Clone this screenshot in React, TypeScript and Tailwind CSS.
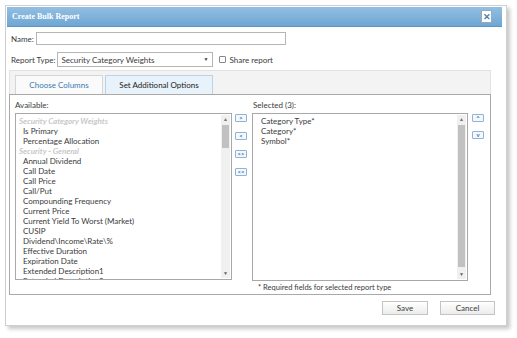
import React from "react";

const available: { label: string; group?: boolean }[] = [
  { label: "Security Category Weights", group: true },
  { label: "Is Primary" },
  { label: "Percentage Allocation" },
  { label: "Security - General", group: true },
  { label: "Annual Dividend" },
  { label: "Call Date" },
  { label: "Call Price" },
  { label: "Call/Put" },
  { label: "Compounding Frequency" },
  { label: "Current Price" },
  { label: "Current Yield To Worst (Market)" },
  { label: "CUSIP" },
  { label: "Dividend\\Income\\Rate\\%" },
  { label: "Effective Duration" },
  { label: "Expiration Date" },
  { label: "Extended Description1" },
  { label: "Extended Description2" },
];

const selected = ["Category Type*", "Category*", "Symbol*"];

const Scrollbar = ({ thumbTop, thumbBottom }: { thumbTop: number; thumbBottom: number }) => (
  <div className="absolute right-[1px] top-[1px] bottom-[1px] w-[9px] bg-[#f0f0f0]">
    <div className="h-[9px] flex items-center justify-center text-[5px] leading-none text-[#707070]">▲</div>
    <div
      className="absolute left-[1px] right-[1px] bg-[#c1c1c1]"
      style={{ top: thumbTop, bottom: thumbBottom }}
    />
    <div className="absolute bottom-0 left-0 right-0 h-[9px] flex items-center justify-center text-[5px] leading-none text-[#606060]">▼</div>
  </div>
);

const SmallBtn = ({ children }: { children: React.ReactNode }) => (
  <div className="w-[12px] h-[8px] border border-[#8fb3d6] rounded-[1px] bg-[#f4f8fc] flex items-center justify-center text-[6px] leading-none text-[#3d6fa8] font-bold">
    {children}
  </div>
);

export default function App() {
  return (
    <div className="w-[517px] h-[338px] bg-white overflow-hidden font-['Lato',sans-serif] text-[#3a3a3a]">
      <div className="ml-[5px] mt-[5px] w-[502px] h-[321px] border border-[#cfcfcf] bg-white shadow-[3px_3px_4px_rgba(0,0,0,0.22)] p-px flex flex-col">
        {/* title bar */}
        <div className="h-[20px] mr-[3px] bg-gradient-to-b from-[#93bfe2] to-[#6ea6d3] border-b border-[#5d96c6] flex items-center justify-between pl-[5px] pr-[10px]">
          <span className="text-white font-bold text-[8px] font-['Liberation_Serif',serif]">
            Create Bulk Report
          </span>
          <div className="w-[11px] h-[13px] bg-white border border-[#9ab] flex items-center justify-center text-[#4a7fb8] text-[9px] font-bold leading-none">
            ✕
          </div>
        </div>

        {/* form rows */}
        <div className="pl-[4px] pt-[5px] flex items-center gap-[2px] text-[8px]">
          <span>Name:</span>
          <div className="w-[250px] h-[13px] border border-[#b5b5b5] bg-white" />
        </div>
        <div className="pl-[4px] pt-[7px] flex items-center text-[8px]">
          <span>Report Type:</span>
          <div className="ml-[2px] w-[156px] h-[15px] border border-[#b5b5b5] bg-white flex items-center justify-between pl-[3px] pr-[4px]">
            <span>Security Category Weights</span>
            <span className="text-[5px]">▼</span>
          </div>
          <div className="ml-[6px] w-[7px] h-[7px] border border-[#888] rounded-[1px] bg-white" />
          <span className="ml-[3px]">Share report</span>
        </div>

        {/* tabs */}
        <div className="ml-[2px] mt-[3px] w-[482px] flex flex-col">
          <div className="h-[24px] bg-[#f3f3f3] border border-b-0 border-[#e2e2e2] flex items-end pl-[5px] gap-[2px]">
            <div className="w-[88px] h-[19px] border border-b-0 border-[#d6d6d6] bg-[#fafafa] flex items-center justify-center text-[8px] text-[#3a78b5]">
              Choose Columns
            </div>
            <div className="w-[108px] h-[19px] border border-b-0 border-[#b9d3ea] bg-[#e8f2fb] flex items-center justify-center text-[8px] text-[#222]">
              Set Additional Options
            </div>
          </div>
          <div className="h-[201px] border border-[#a9a9a9] bg-white px-[5px] pt-[5px] flex flex-col">
            <div className="flex text-[8px] leading-[10px]">
              <span className="w-[238px]">Available:</span>
              <span>Selected (3):</span>
            </div>
            <div className="mt-[3px] flex items-start">
              {/* available list */}
              <div className="relative w-[217px] h-[167px] border border-[#a8a8a8] bg-white overflow-hidden">
                <div className="pt-[2px] text-[8px] leading-[10px]">
                  {available.map((it) =>
                    it.group ? (
                      <div key={it.label} className="pl-[3px] italic font-bold text-[#c8c8c8]">
                        {it.label}
                      </div>
                    ) : (
                      <div key={it.label} className="pl-[7px]">
                        {it.label}
                      </div>
                    )
                  )}
                </div>
                <Scrollbar thumbTop={10} thumbBottom={130} />
              </div>
              {/* move buttons */}
              <div className="ml-[3px] pt-[1px] flex flex-col gap-[10px]">
                <SmallBtn>&gt;</SmallBtn>
                <SmallBtn>&lt;</SmallBtn>
                <SmallBtn>&gt;&gt;</SmallBtn>
                <SmallBtn>&lt;&lt;</SmallBtn>
              </div>
              {/* selected list */}
              <div className="ml-[5px] relative w-[216px] h-[168px] border border-[#a8a8a8] bg-white overflow-hidden">
                <div className="pt-[2px] pl-[8px] text-[8px] leading-[10px]">
                  {selected.map((s) => (
                    <div key={s}>{s}</div>
                  ))}
                </div>
                <Scrollbar thumbTop={10} thumbBottom={12} />
              </div>
              <div className="ml-[4px] pt-[1px] flex flex-col gap-[9px]">
                <SmallBtn>^</SmallBtn>
                <SmallBtn>v</SmallBtn>
              </div>
            </div>
            <div className="mt-[2px] ml-[243px] text-[7.5px] leading-[10px]">* Required fields for selected report type</div>
          </div>
        </div>

        {/* footer buttons */}
        <div className="mt-[6px] mr-[10px] flex justify-end gap-[12px]">
          <div className="w-[46px] h-[14px] border border-[#c4c4c4] bg-gradient-to-b from-white to-[#ececec] flex items-center justify-center text-[8px]">
            Save
          </div>
          <div className="w-[55px] h-[14px] border border-[#c4c4c4] bg-gradient-to-b from-white to-[#ececec] flex items-center justify-center text-[8px]">
            Cancel
          </div>
        </div>
      </div>
    </div>
  );
}
